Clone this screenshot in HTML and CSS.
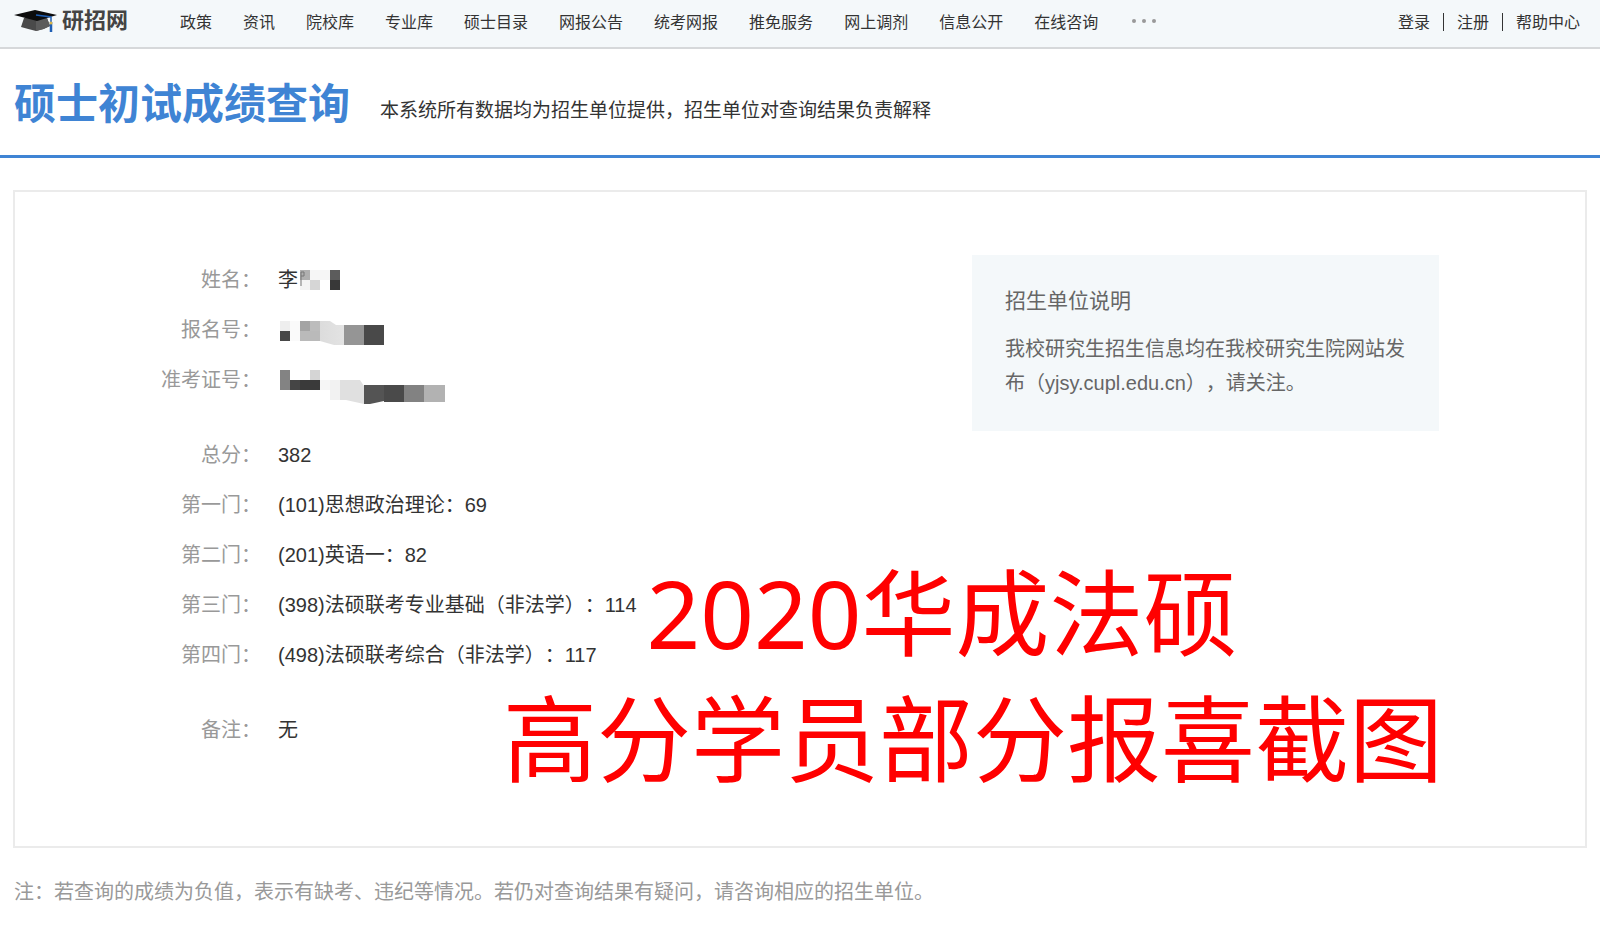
FILE: index.html
```html
<!DOCTYPE html>
<html lang="zh-CN">
<head>
  <meta charset="UTF-8" />
  <meta name="viewport" content="width=device-width, initial-scale=1.0"/>
  <title>硕士初试成绩查询</title>
  <link rel="stylesheet" href="styles.css">
</head>
<body>

<header class="topbar">
  <a class="logo" href="#">
    <svg width="44" height="24" viewBox="0 0 44 24" aria-hidden="true">
      <path d="M10 9 L7 18 Q14 20 22 22 Q29 21 36 17 L33 9 Z" fill="#4a4a4a"/>
      <path d="M22 12 L22 22 Q29 21 36 17 L33 9 Z" fill="#5c5c5c"/>
      <path d="M0 6 L21 1 L43 6 L23 12 Z" fill="#0c0c0c"/>
      <path d="M22 6 L37 8 V14" fill="none" stroke="#1f5fb4" stroke-width="1.5"/>
      <path d="M37 13 V23" stroke="#1f5fb4" stroke-width="2.5"/>
      <circle cx="37" cy="14" r="1.5" fill="#d9b54a"/>
    </svg>
    <span>研招网</span>
  </a>
  <nav class="menu">
    <a href="#">政策</a>
    <a href="#">资讯</a>
    <a href="#">院校库</a>
    <a href="#">专业库</a>
    <a href="#">硕士目录</a>
    <a href="#">网报公告</a>
    <a href="#">统考网报</a>
    <a href="#">推免服务</a>
    <a href="#">网上调剂</a>
    <a href="#">信息公开</a>
    <a href="#">在线咨询</a>
    <button class="more" type="button" aria-label="更多"><i></i><i></i><i></i></button>
  </nav>
  <div class="user-links">
    <a href="#">登录</a>
    <a href="#">注册</a>
    <a href="#">帮助中心</a>
  </div>
</header>

<div class="page-title">
  <h1>硕士初试成绩查询</h1>
  <p>本系统所有数据均为招生单位提供，招生单位对查询结果负责解释</p>
</div>

<main class="card">
  <table class="score-table">
    <tr>
      <th scope="row">姓名：</th>
      <td>
        <div class="masked">李<svg width="44" height="20" viewBox="298 270 44 20" aria-hidden="true">
          <rect x="300" y="270" width="10" height="10" fill="#b0b0b0"/>
          <rect x="310" y="270" width="20" height="10" fill="#f6f6f6"/>
          <rect x="300" y="280" width="10" height="10" fill="#f4f4f4"/>
          <rect x="310" y="280" width="10" height="10" fill="#d6d6d6"/>
          <rect x="330" y="270" width="10" height="10" fill="#5c5c5c"/>
          <rect x="330" y="280" width="10" height="10" fill="#383838"/>
          <path d="M301 272 V286 M301 272 H304 V276 H301" fill="none" stroke="#777"/>
        </svg></div>
      </td>
    </tr>
    <tr>
      <th scope="row">报名号：</th>
      <td>
        <div class="masked"><svg width="110" height="30" viewBox="278 314 110 30" aria-hidden="true">
          <defs>
            <linearGradient id="fade" x1="0" x2="1" y1="0" y2="0">
              <stop offset="0" stop-color="#dcdcdc"/>
              <stop offset="1" stop-color="#e3e3e3"/>
            </linearGradient>
          </defs>
          <rect x="280" y="320" width="10" height="10" fill="#eee"/>
          <rect x="280" y="330" width="10" height="10" fill="#474747"/>
          <rect x="290" y="320" width="10" height="20" fill="#fafafa"/>
          <rect x="300" y="320" width="10" height="10" fill="#a4a4a4"/>
          <rect x="310" y="320" width="10" height="10" fill="#bcbcbc"/>
          <rect x="300" y="330" width="20" height="10" fill="#bababa"/>
          <path d="M320 320 H330 L336 324 H344 V344 H334 L320 340 Z" fill="url(#fade)"/>
          <rect x="344" y="324" width="20" height="20" fill="#959595"/>
          <rect x="364" y="324" width="20" height="20" fill="#494949"/>
        </svg></div>
      </td>
    </tr>
    <tr>
      <th scope="row">准考证号：</th>
      <td>
        <div class="masked"><svg width="170" height="50" viewBox="278 355 170 50" aria-hidden="true">
          <rect x="280" y="370" width="10" height="20" fill="#838383"/>
          <rect x="310" y="370" width="10" height="10" fill="#d5d5d5"/>
          <rect x="290" y="380" width="10" height="10" fill="#454545"/>
          <rect x="300" y="380" width="20" height="10" fill="#3a3a3a"/>
          <rect x="320" y="380" width="10" height="10" fill="#f6f6f6"/>
          <rect x="330" y="380" width="10" height="20" fill="#f2f2f2"/>
          <path d="M340 380 H360 L364 386 V404 L346 400 H340 Z" fill="#e0e0e0"/>
          <path d="M364 385 H384 V401 L370 404 H364 Z" fill="#545454"/>
          <rect x="384" y="385" width="20" height="17" fill="#4a4a4a"/>
          <rect x="404" y="385" width="20" height="17" fill="#828282"/>
          <rect x="424" y="385" width="21" height="17" fill="#b2b2b2"/>
        </svg></div>
      </td>
    </tr>
    <tr class="group-start">
      <th scope="row">总分：</th>
      <td>382</td>
    </tr>
    <tr>
      <th scope="row">第一门：</th>
      <td>(101)思想政治理论：69</td>
    </tr>
    <tr>
      <th scope="row">第二门：</th>
      <td>(201)英语一：82</td>
    </tr>
    <tr>
      <th scope="row">第三门：</th>
      <td>(398)法硕联考专业基础（非法学）：114</td>
    </tr>
    <tr>
      <th scope="row">第四门：</th>
      <td>(498)法硕联考综合（非法学）：117</td>
    </tr>
    <tr class="group-start">
      <th scope="row">备注：</th>
      <td>无</td>
    </tr>
  </table>

  <aside class="notice">
    <h2>招生单位说明</h2>
    <p>我校研究生招生信息均在我校研究生院网站发布（yjsy.cupl.edu.cn），请关注。</p>
  </aside>

  <div class="banner">
    <p class="banner-top">2020华成法硕</p>
    <p>高分学员部分报喜截图</p>
  </div>
</main>

<p class="footnote">注：若查询的成绩为负值，表示有缺考、违纪等情况。若仍对查询结果有疑问，请咨询相应的招生单位。</p>

</body>
</html>
```

FILE: styles.css
```css
* { box-sizing: border-box; }
body { font-family: "Liberation Sans", "Noto Sans CJK SC", sans-serif; margin: 0; background: #fff; color: #333; text-spacing-trim: space-all; }
h1, h2, p { margin: 0; font-weight: normal; }
a { color: inherit; text-decoration: none; }

/* top navigation */
.topbar { display: flex; align-items: center; height: 49px; padding: 0 20px 6px 14px; background: #f4f8fa; border-bottom: 2px solid #d6d8da; font-size: 16px; white-space: nowrap; }
.logo { display: flex; align-items: center; gap: 4px; width: 166px; color: #444; font-size: 22px; line-height: 30px; font-weight: bold; }
.menu { display: flex; align-items: center; gap: 31px; flex: 1; }
.more { display: flex; gap: 6px; margin-left: 3px; padding: 0; border: none; background: none; cursor: pointer; }
.more i { width: 4px; height: 4px; border-radius: 50%; background: #999; }
.user-links { display: flex; align-items: center; }
.user-links a + a { display: flex; align-items: center; }
.user-links a + a::before { content: ""; width: 1px; height: 18px; margin: 2px 13px 0; background: #333; }

/* page title */
.page-title { display: flex; align-items: center; gap: 30px; height: 109px; padding: 0 14px; border-bottom: 3px solid #3f84d4; }
.page-title h1 { padding-bottom: 4px; font-size: 42px; font-weight: bold; color: #3f84d4; }
.page-title p { padding-top: 12px; font-size: 19px; }

/* result card */
.card { position: relative; display: flex; justify-content: space-between; align-items: flex-start; margin: 32px 13px 0; padding: 63px 146px 91px; border: 2px solid #ebebeb; }
.score-table { border-collapse: collapse; font-size: 20px; }
.score-table th, .score-table td { height: 50px; padding: 0; line-height: 30px; text-align: left; }
.score-table th { color: #999; font-weight: normal; text-align: right; white-space: nowrap; }
.score-table td { padding-left: 17px; }
.score-table .group-start th, .score-table .group-start td { height: 75px; padding-top: 25px; }
.masked { display: flex; align-items: center; }

.notice { flex: 0 0 467px; padding: 28px 33px 31px; background: #f4f8fa; color: #666; }
.notice h2 { margin-bottom: 14px; font-size: 21px; line-height: 35px; }
.notice p { font-size: 20px; line-height: 34px; }

.banner { position: absolute; top: 358px; right: 142px; color: #f00; font-family: "Noto Sans", "Noto Sans CJK SC", sans-serif; font-size: 94px; line-height: 126px; text-align: center; white-space: nowrap; }
.banner-top { padding-right: 62px; }

.footnote { padding: 29px 14px; color: #999; font-size: 20px; line-height: 30px; }
```
